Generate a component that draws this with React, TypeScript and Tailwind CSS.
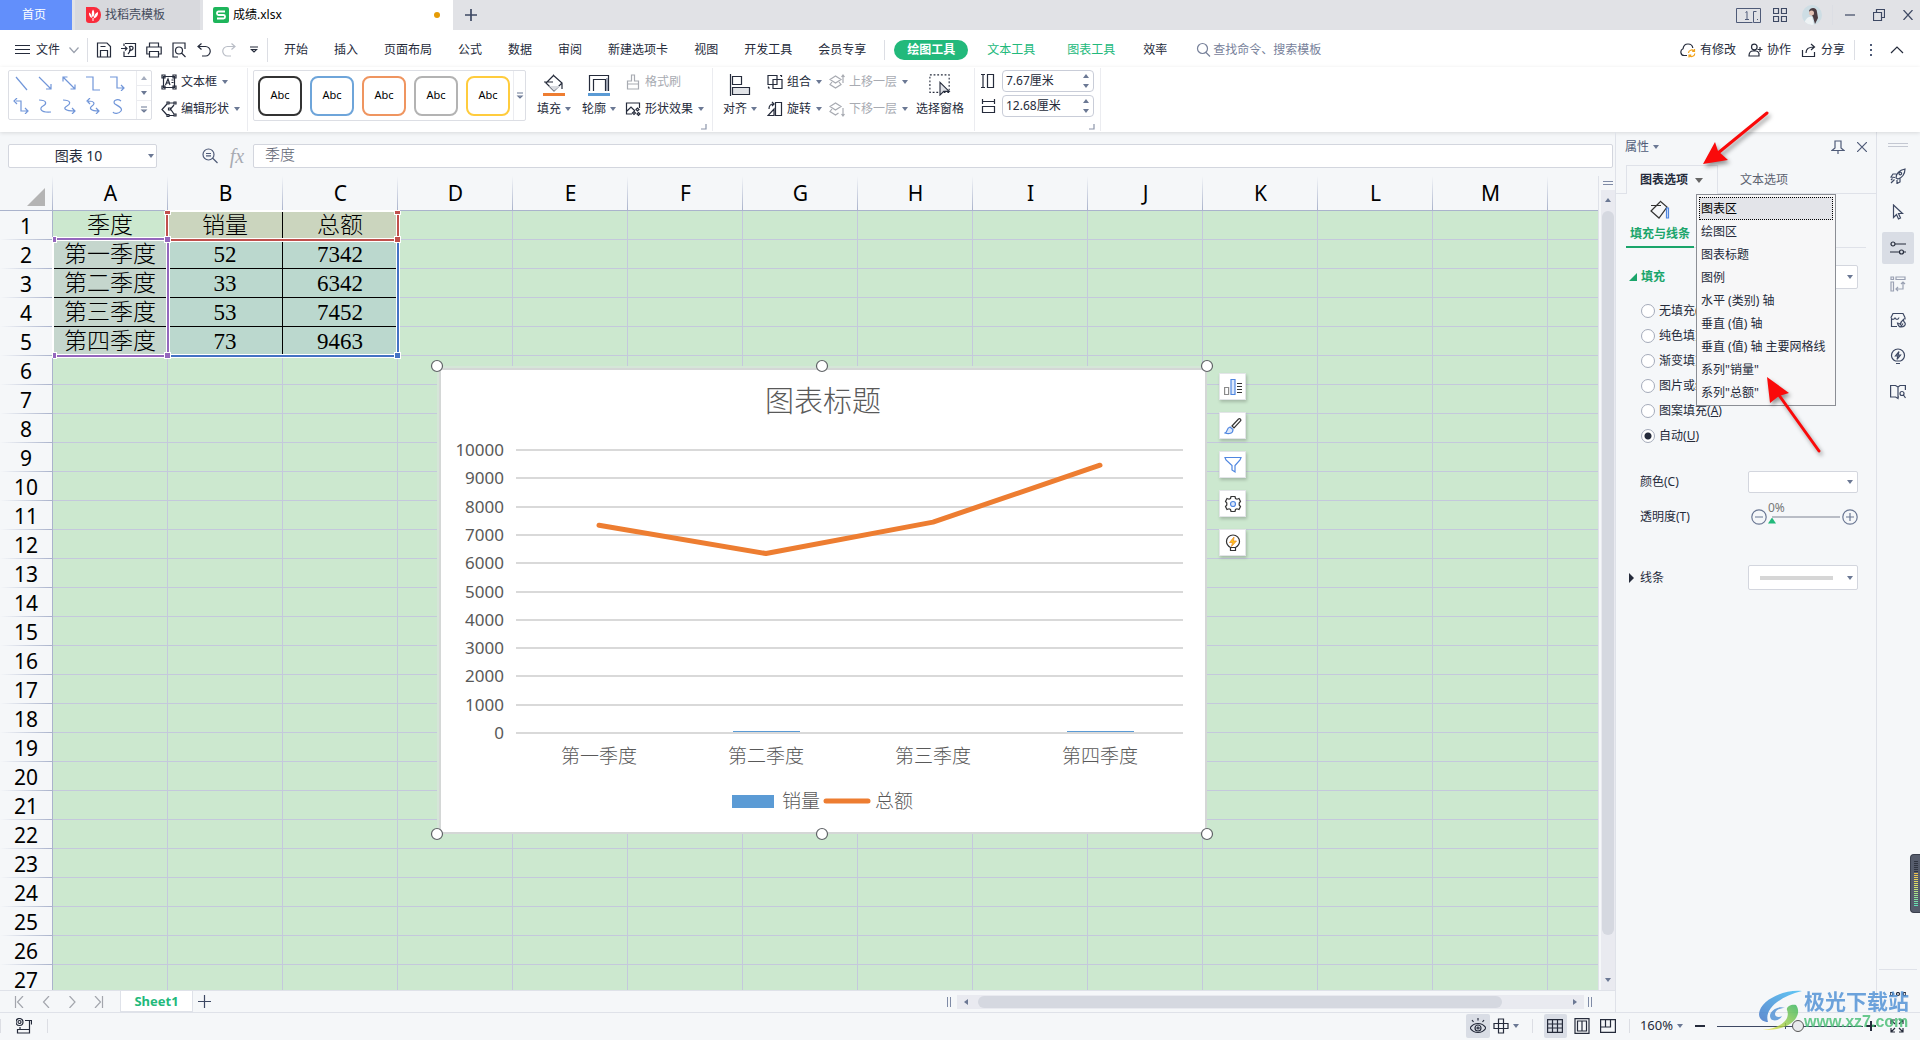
import { useState, type ReactNode } from 'react'
import { clsx } from 'clsx'

const COLUMNS = ['A', 'B', 'C', 'D', 'E', 'F', 'G', 'H', 'I', 'J', 'K', 'L', 'M']
const ROWS = Array.from({ length: 27 }, (_, i) => i + 1)

const DATA = [
  ['季度', '销量', '总额'],
  ['第一季度', '52', '7342'],
  ['第二季度', '33', '6342'],
  ['第三季度', '53', '7452'],
  ['第四季度', '73', '9463'],
]

const MENU = ['开始', '插入', '页面布局', '公式', '数据', '审阅', '新建选项卡', '视图', '开发工具', '会员专享']

const CHART_PARTS = [
  '图表区',
  '绘图区',
  '图表标题',
  '图例',
  '水平 (类别) 轴',
  '垂直 (值) 轴',
  '垂直 (值) 轴 主要网格线',
  '系列"销量"',
  '系列"总额"',
]

const FILLS = [
  ['无填充', 'N'],
  ['纯色填充', 'S'],
  ['渐变填充', 'G'],
  ['图片或纹理填充', 'P'],
  ['图案填充', 'A'],
  ['自动', 'U'],
]

function Icon({
  d,
  box = 16,
  className,
  children,
}: {
  d?: string
  box?: number
  className?: string
  children?: ReactNode
}) {
  return (
    <svg
      viewBox={`0 0 ${box} ${box}`}
      className={clsx('shrink-0', className ?? 'size-4')}
      fill="none"
      stroke="currentColor"
      strokeWidth="1.2"
      aria-hidden
    >
      {d && <path d={d} />}
      {children}
    </svg>
  )
}

function Caret({ className }: { className?: string }) {
  return (
    <svg viewBox="0 0 6 4" className={clsx('h-1 w-1.5 shrink-0', className)} aria-hidden>
      <path d="M0 0h6L3 4z" fill="#6b7894" />
    </svg>
  )
}

function Divider({ className }: { className?: string }) {
  return <span className={clsx('w-px shrink-0 bg-[#dcdee4]', className)} />
}

/* ---------- title bar ---------- */

function TitleBar() {
  return (
    <header className="flex h-[30px] shrink-0 items-center bg-[#e1e2e6] text-xs text-[#3d4863]">
      <button className="h-full w-[72px] bg-[#628ffb] pr-1 text-white">首页</button>
      <button className="ml-[3px] flex h-full w-[125px] items-center gap-1 bg-[#d8d9dd] pl-[11px] text-[#444b5c]">
        <svg viewBox="0 0 15 16" className="h-4 w-[15px]" aria-hidden>
          <path d="M0 0h8a7 8 0 0 1 0 16H3a3 3 0 0 1-3-3z" fill="#fa2c3c" />
          <path d="M7 2.500c2 3 1.500 6-.2 8C5.500 8.500 5.200 5 7 2.500zM3 5.500c2 1 3 3 3 5.500-2.200-.6-3.300-3-3-5.500zM12 5c.3 3-1 5.500-4.300 6.500.2-3 1.500-5.300 4.300-6.500zM6.500 11h1v3h-1z" fill="#fff" />
        </svg>
        找稻壳模板
      </button>
      <div className="ml-[3px] flex h-full w-[250px] items-center gap-1 bg-white pl-[10px] text-black">
        <svg viewBox="0 0 16 16" className="size-4" aria-hidden>
          <rect width="16" height="16" rx="2" fill="#1eb55b" />
          <path d="M12 4.500H5.500A1.500 1.500 0 0 0 4 6v.5A1.500 1.500 0 0 0 5.500 8h5A1.500 1.500 0 0 1 12 9.500v.5a1.500 1.500 0 0 1-1.500 1.500H4" fill="none" stroke="#fff" strokeWidth="1.800" />
        </svg>
        成绩.xlsx
        <span className="mr-[13px] ml-auto size-1.5 rounded-full bg-[#e59b06]" />
      </div>
      <button className="ml-3 size-3" aria-label="新建标签">
        <Icon box={12} className="size-3" d="M6 0v12M0 6h12">
          <path d="M6 0v12M0 6h12" />
        </Icon>
      </button>
      <div className="ml-auto flex h-full items-center pr-[7px]">
        <svg viewBox="0 0 25 15" className="h-[15px] w-[25px]" fill="none" stroke="#4f5b78" aria-hidden>
          <path d="M22 .5H.5v14h16M24.500.5v14h-7V3.500h3M24.500.5H21M21 11.500h1M9.500 4.500l1.500-1v8M9 11.500h4" />
        </svg>
        <Icon box={14} className="ml-3 size-3.5" d="M.5.5h5v5h-5zM8.500.5h5v5h-5zM.5 8.500h5v5h-5zM8.500 8.500h5v5h-5z" />
        <svg viewBox="0 0 20 20" className="ml-[15px] size-5 rounded-full" aria-hidden>
          <rect width="20" height="20" fill="#cddde4" />
          <path d="M7 6c1-4 8-4 8 1l1 6-3 6-2-7z" fill="#4a3b40" />
          <circle cx="9.500" cy="8" r="2.500" fill="#e4c3b5" />
          <path d="M2 20c1-6 4-9 8-8l2 8z" fill="#eef3f5" />
        </svg>
        <Divider className="ml-[10px] h-5 bg-[#c9cbd2]" />
        <button className="ml-3 h-3 w-2.5" aria-label="最小化">
          <Icon box={10} className="size-2.5" d="M0 5h10" />
        </button>
        <button className="ml-[18px] size-3" aria-label="还原">
          <Icon box={12} className="size-3" d="M.5 3.500h8v8h-8zM3.500 3V.5h8v8H9" />
        </button>
        <button className="ml-[18px] size-2.5" aria-label="关闭">
          <Icon box={10} className="size-2.5" d="M.5 0l9 10M9.500 0l-9 10" />
        </button>
      </div>
    </header>
  )
}

/* ---------- menu row ---------- */

const QUICK: [string, string][] = [
  ['保存', 'M1.500 1h9.500l3.500 3.500V15H1.500zM4.500 15V8.500h7V15M4.500 4.500h5'],
  ['输出为PDF', 'M4 1.500h10.500v13H3v-5M3 4V1.500M0 6.500h6M4 4.500l2 2-2 2M7 12c2-2 2.500-5 1.500-7.500 2-.5 4 0 3.500 2s-3 2-4 2'],
  ['打印', 'M3.500 5V1h9v4M3.500 12H.8V5h14.400v7h-2.700M3.500 9.500h9V15h-9z'],
  ['打印预览', 'M7 15H2V1h12v6M11 11.500l3.500 3.500M4.500 8.500a3.500 3.500 0 1 0 7 0a3.500 3.500 0 1 0-7 0'],
  ['撤销', 'M5.500 1.500L2 4.500l3.500 3M2 4.500h7.500a4.500 4.500 0 0 1 0 9.500H6'],
]

function MenuBar() {
  return (
    <nav className="flex h-[37px] shrink-0 items-center bg-white pt-0.5 text-xs text-[#252b3b]">
      <button className="ml-[15px] flex items-center gap-1.5">
        <Icon box={15} className="size-[15px]" d="M0 3.500h15M0 7.500h15M0 11.500h15" />
        文件
        <Icon box={10} className="ml-[3px] size-2.5 text-[#9aa0ad]" d="M.5 2.500L5 7.500l4.500-5" />
      </button>
      <Divider className="ml-2 h-6" />
      <div className="ml-2 flex items-center gap-[9px]">
        {QUICK.map(([name, d]) => (
          <button key={name} aria-label={name}>
            <Icon d={d} />
          </button>
        ))}
        <button aria-label="恢复" className="text-[#b9bdc6]">
          <Icon d="M10.500 1.500L14 4.500l-3.500 3M14 4.500H6.500a4.500 4.500 0 0 0 0 9.500H10" />
        </button>
        <button aria-label="自定义" className="px-1">
          <Icon box={8} className="size-2" d="M0 1h8M1.500 3.500h5L4 6z" />
        </button>
      </div>
      <Divider className="ml-[5px] h-6" />
      <div className="ml-4 flex items-center gap-[26px]">
        {MENU.map((m) => (
          <button key={m}>{m}</button>
        ))}
      </div>
      <Divider className="ml-[18px] h-5" />
      <button className="ml-[9px] h-5 rounded-full bg-[#22b97b] px-[13px] font-bold text-white">绘图工具</button>
      <button className="ml-[19px] text-[#22b97b]">文本工具</button>
      <button className="ml-8 text-[#22b97b]">图表工具</button>
      <button className="ml-7">效率</button>
      <label className="ml-7 flex items-center gap-0.5 text-[#77819a]">
        <Icon d="M2.500 6.500a5 5 0 1 0 10 0a5 5 0 1 0-10 0M11 10.500l4 4" />
        <input className="w-32 outline-none placeholder:text-[#77819a]" placeholder="查找命令、搜索模板" />
      </label>
      <div className="ml-auto flex items-center pr-4">
        <button className="flex items-center gap-1">
          <Icon d="M7 13.500H4A3.500 3.500 0 0 1 3 6.800C3.500 3.500 5.500 2 8 2s4.500 1.500 4.800 4">
            <path d="M8.500 11a3.200 3.200 0 0 1 5.500-2M14.800 11.500a3.200 3.200 0 0 1-5.500 2M14.500 7v2.300h-2.300M9 15.500v-2.300h2.300" stroke="#f2a31b" />
          </Icon>
          有修改
        </button>
        <button className="ml-3 flex items-center gap-[3px]">
          <Icon d="M3.500 5a2.800 2.800 0 1 0 5.600 0a2.800 2.800 0 1 0-5.600 0M1 14c0-3 1.500-5 4-5h3c1.500 0 2.500 1 3 2.500V14zM12 5v5M9.500 7.500h5" />
          协作
        </button>
        <button className="ml-2.5 flex items-center gap-1">
          <Icon d="M1.500 8v6.500h12V10M5 11c0-4 2.500-6 8-6M10 2l3.500 3-3.500 3" />
          分享
        </button>
        <Divider className="ml-[9px] h-5" />
        <button className="ml-[14px] w-1 text-[#4f5b78]" aria-label="更多">
          <svg viewBox="0 0 4 14" className="h-3.5 w-1" fill="#4f5b78" aria-hidden>
            <path d="M1 1h2v2H1zM1 6h2v2H1zM1 11h2v2H1z" />
          </svg>
        </button>
        <button className="ml-[17px]" aria-label="收起功能区">
          <Icon box={14} className="size-3.5" d="M1 10l6-6 6 6" />
        </button>
      </div>
    </nav>
  )
}

/* ---------- ribbon ---------- */

const LINES = [
  'M3 2l11 13',
  'M2 2l12 12M14 9v5H9',
  'M2 2l12 12M14 9.500V14H9.500M6.500 2H2v4.500',
  'M1 2h7v13h7',
  'M1 2h7v11h7M12 10l3 3-3 3',
  'M3 3h5v10h6M4 0L1 3l3 3M12 10l3 3-3 3',
  'M2 2c8 0 8 4 4 6s-3 7 8 6',
  'M2 2c8 0 8 4 4 6s-3 5 8 5M11 10l3 3-3 3',
  'M3 3c7 0 7 3 4 5s-2 5 7 5M5 0L2 3l3 3M11 10l3 3-3 3',
  'M12 3c-4-3-9 0-6 3 3 2 8 4 6 7s-7 3-8 1',
]

function SmallTool({
  label,
  d,
  caret = true,
  muted,
}: {
  label: string
  d: string
  caret?: boolean
  muted?: boolean
}) {
  return (
    <button className={clsx('flex h-6 items-center gap-1', muted && 'text-[#a8abb2]')}>
      <Icon d={d} />
      {label}
      {caret && <Caret className="ml-px" />}
    </button>
  )
}

function BigTool({ label, caret = true, children }: { label: string; caret?: boolean; children: ReactNode }) {
  return (
    <button className="flex flex-col items-center pt-1">
      {children}
      <span className="mt-[5px] flex h-4 items-center gap-1">
        {label}
        {caret && <Caret />}
      </span>
    </button>
  )
}

function SizeField({ label, value, d }: { label: string; value: string; d: string }) {
  return (
    <label className="flex items-center gap-[5px]">
      <Icon d={d} />
      <span className="flex h-[22px] w-[92px] items-center rounded-sm border border-[#c9cdd8] bg-white pr-1">
        <input className="w-0 grow px-[3px] outline-none" defaultValue={value} aria-label={label} />
        <span className="flex flex-col gap-1.5">
          <Caret className="rotate-180" />
          <Caret />
        </span>
      </span>
    </label>
  )
}

function GalleryMore() {
  return <Icon box={8} className="size-2 text-[#6b7894]" d="M1 1h6M2 4h4L4 6z" />
}

const STYLES = ['border-[#333]', 'border-[#6ea5da]', 'border-[#ef9560]', 'border-[#b3b3b3]', 'border-[#ffcc3d]']

function Ribbon() {
  return (
    <div className="relative z-10 flex h-[65px] shrink-0 bg-white py-px text-xs whitespace-nowrap text-[#252b3b] shadow-[0_1px_4px_rgba(0,0,0,0.12)]">
      <section className="flex w-[248px] items-start border-r border-[#ebecf0] pt-0.5 pl-2">
        <div className="flex h-[50px] w-36 rounded-xs border border-[#dcdee4] text-[#7196d9]">
          <div className="grid grow grid-cols-5 place-items-center pr-[7px] pb-0.5">
            {LINES.map((d) => (
              <button key={d} aria-label="线条">
                <Icon d={d} />
              </button>
            ))}
          </div>
          <div className="flex w-[15px] flex-col divide-y divide-[#ebecf0] border-l border-[#ebecf0]">
            <button className="grid grow place-items-center" aria-label="上一行">
              <Caret className="rotate-180 opacity-60" />
            </button>
            <button className="grid grow place-items-center" aria-label="下一行">
              <Caret />
            </button>
            <button className="grid grow place-items-center" aria-label="其他">
              <GalleryMore />
            </button>
          </div>
        </div>
        <div className="ml-[9px] flex flex-col gap-[3px]">
          <SmallTool
            label="文本框"
            d="M2.500 2.500h11v11h-11zM1 1h3v3H1zM12 1h3v3h-3zM1 12h3v3H1zM12 12h3v3h-3zM4.500 11L7 5l2 6M5.500 9h3M10.500 6h2M10.500 8.500h2"
          />
          <SmallTool label="编辑形状" d="M6 3L1 8.500 6 14M8 2h5M8 14.500h5M13 4L9.500 8l3.500 5M6 1h2v2H6zM13 1h2v2h-2zM7.500 7h2v2h-2zM13 13h2v2h-2zM6 13.500h2v2H6z" />
        </div>
      </section>

      <section className="relative flex w-[465px] items-start border-r border-[#ebecf0] pt-0.5 pl-[5px]">
        <div className="flex h-[51px] w-[273px] items-stretch rounded-xs border border-[#dcdee4]">
          <div className="flex grow items-center gap-2 pl-1">
            {STYLES.map((s) => (
              <button key={s} className={clsx('h-10 w-11 rounded-lg border-2 text-[11px] text-black', s)}>
                Abc
              </button>
            ))}
          </div>
          <button className="grid w-3 place-items-center border-l border-[#ebecf0]" aria-label="更多样式">
            <GalleryMore />
          </button>
        </div>
        <div className="ml-[11px] flex gap-[11px]">
          <BigTool label="填充">
            <Icon box={22} className="size-[22px]" d="M10 1l9 8-8 8-8-8 8-8M1 8h9M19 9v6">
              <path d="M6 12h11l-6 5z" fill="#d9dbe0" stroke="none" />
              <path d="M0 20.500h22" stroke="#ee7d31" strokeWidth="3" />
            </Icon>
          </BigTool>
          <BigTool label="轮廓">
            <Icon box={22} className="size-[22px]" d="M1.500 17V1.500h19V17M5.500 17V5.500h12V17">
              <path d="M19 4v13" stroke="#9da3b1" strokeWidth="2" />
              <path d="M0 20.500h22" stroke="#5b9bd5" strokeWidth="3" />
            </Icon>
          </BigTool>
        </div>
        <div className="ml-[9px] flex flex-col gap-[3px]">
          <SmallTool label="格式刷" caret={false} muted d="M6.500 1h3v6h4v3h-11V7h4zM2.500 10v5h11v-5" />
          <SmallTool label="形状效果" d="M7 13H1.500V2h13v5M2 10l4-4 4 4M11 8.500l1.500-1.500L14 8.500 12.500 10zM7.500 12L9 10.500l1.500 1.500L9 13.500zM12 13l1.500-1.500L15 13l-1.500 1.500z" />
        </div>
        <Icon box={8} className="absolute right-1 bottom-0 size-2 text-[#8b94a9]" d="M6 1v5H1" />
      </section>

      <section className="flex w-[262px] items-start border-r border-[#ebecf0] pt-0.5 pl-2.5">
        <BigTool label="对齐">
          <Icon box={22} className="size-[22px]" d="M1.500 0v22M3.500 2.500h9v8h-9z">
            <path d="M3.500 13.500h17v7h-17z" fill="#e2e4e8" />
          </Icon>
        </BigTool>
        <div className="ml-2.5 flex flex-col gap-[3px]">
          <SmallTool label="组合" d="M1 1.500h9v9H1zM6 5.500h9v9H6zM13 1.500h2M14.500 1v2M1 14h2M1.500 12.500v2" />
          <SmallTool label="旋转" d="M8.500 1.500h6v13h-6zM1 14.500h6V8zM2 8c0-3 1-5 4.500-5M5 1l2 2-2 2" />
        </div>
        <div className="ml-[7px] flex flex-col gap-[3px]">
          <SmallTool label="上移一层" muted d="M1 5.500L6.500 2 12 5.500 6.500 9zM3 8l-2 2.500L6.500 14l5.500-3.500L10 8M14 9V1M12.500 3L14 1l1.500 2" />
          <SmallTool label="下移一层" muted d="M1 5.500L6.500 2 12 5.500 6.500 9zM3 8l-2 2.500L6.500 14l3-2M14 7v8M12.500 13l1.500 2 1.500-2" />
        </div>
        <div className="ml-2">
          <BigTool label="选择窗格" caret={false}>
            <Icon box={24} className="h-[22px] w-6">
              <path d="M1 1h21v19H1z" strokeDasharray="2 2" />
              <path d="M12 9v14l4-4h6z" fill="#dfe1e6" />
            </Icon>
          </BigTool>
        </div>
      </section>

      <section className="relative flex w-[126px] flex-col gap-[3px] border-r border-[#ebecf0] pt-0.5 pl-[6px]">
        <SizeField label="高度" value="7.67厘米" d="M0 1.500h4M2 1.500v13M0 14.500h4M6.500 1.500h6v13h-6z" />
        <SizeField label="宽度" value="12.68厘米" d="M1 3.500h13M1.500 1v5M13.500 1v5M1.500 8.500h12v6h-12z" />
        <Icon box={8} className="absolute right-1 bottom-0 size-2 text-[#8b94a9]" d="M6 1v5H1" />
      </section>
    </div>
  )
}

function FormulaBar() {
  return (
    <div className="flex h-11 shrink-0 items-center pt-[3px] pr-0.5 pl-2">
      <div className="flex h-6 w-[149px] items-center rounded-xs border border-[#d3d6de] bg-white pr-0.5">
        <input
          className="w-0 grow text-center text-sm text-[#252b3b] outline-none"
          defaultValue="图表 10"
          aria-label="名称框"
        />
        <Caret />
      </div>
      <button className="ml-[45px]" aria-label="浏览公式">
        <Icon className="size-4 text-[#4f5b78]" d="M1 6.500a5.500 5.500 0 1 0 11 0a5.500 5.500 0 1 0-11 0M11 10.500l4.500 4.500M4 5.500h5M4 7.800h5" />
      </button>
      <button className="ml-2.5 w-[18px] font-['Liberation_Serif',serif] text-xl leading-none text-[#a8abb2] italic">
        fx
      </button>
      <input
        className="ml-[7px] h-6 w-0 grow rounded-xs border border-[#d3d6de] bg-white px-[11px] pb-1 text-[15px] font-light text-[#5c6270] outline-none"
        defaultValue="季度"
        aria-label="编辑栏"
      />
    </div>
  )
}

/* ---------- chart ---------- */

const CHART_LEFT = 79
const CHART_RIGHT = 746
const CHART_TOP = 84
const CHART_BOTTOM = 367

function yOf(value: number) {
  return CHART_BOTTOM - (value / 10000) * (CHART_BOTTOM - CHART_TOP)
}

function Chart() {
  const quarters = DATA.slice(1)
  const step = (CHART_RIGHT - CHART_LEFT) / quarters.length
  const xOf = (i: number) => Math.round(CHART_LEFT + step * (i + 0.5))
  const points = quarters.map((q, i) => `${xOf(i)},${yOf(Number(q[2]))}`).join(' ')

  return (
    <svg
      viewBox="0 0 770 468"
      className="h-[468px] w-[770px] overflow-visible font-['Noto_Sans','Noto_Sans_CJK_SC',sans-serif]"
      fill="#595959"
    >
      <rect x="0" y="0" width="770" height="468" fill="#d5e6d8" />
      <rect x="3" y="3" width="766" height="464" fill="#fff" stroke="#d4d7d6" strokeWidth="2" />
      <text x="386" y="46" fontSize="29" fontWeight="300" textAnchor="middle">
        图表标题
      </text>
      {Array.from({ length: 11 }, (_, i) => (
        <g key={i}>
          <line x1={CHART_LEFT} x2={CHART_RIGHT} y1={Math.round(yOf(i * 1000))} y2={Math.round(yOf(i * 1000))} stroke="#d9d9d9" strokeWidth="2" />
          <text x="67" y={Math.round(yOf(i * 1000)) + 6} fontSize="17" textAnchor="end">
            {i * 1000}
          </text>
        </g>
      ))}
      {[1, 3].map((i) => (
        <rect key={i} x={xOf(i) - 33} y={CHART_BOTTOM - 2} width="67" height="1" fill="#5b9bd5" />
      ))}
      <polyline points={points} fill="none" stroke="#ed7d31" strokeWidth="5" strokeLinecap="round" strokeLinejoin="round" />
      {quarters.map((q, i) => (
        <text key={q[0]} x={xOf(i)} y="397" fontSize="19" fontWeight="300" textAnchor="middle">
          {q[0]}
        </text>
      ))}
      <rect x="295" y="429" width="42" height="13" fill="#5b9bd5" />
      <text x="345" y="442" fontSize="19" fontWeight="300">
        销量
      </text>
      <line x1="389" x2="431" y1="435" y2="435" stroke="#ed7d31" strokeWidth="5" strokeLinecap="round" />
      <text x="438" y="442" fontSize="19" fontWeight="300">
        总额
      </text>
      {[0, 385, 770].map((x) =>
        [0, 468].map((y) => (
          <circle key={`${x}-${y}`} cx={x} cy={y} r="5.500" fill="#fff" stroke="#5f6366" strokeWidth="1.200" />
        )),
      )}
    </svg>
  )
}

function ChartButtons() {
  const box = 'grid size-[27px] place-items-center border border-[#e3e5e8] bg-white text-[#333] shadow-[1px_2px_3px_rgba(0,0,0,0.2)]'
  return (
    <div className="flex flex-col gap-3">
      <button className={box} aria-label="图表元素">
        <Icon box={18} className="size-[18px]" d="M13 5.500h5M13 8.500h5M13 11.500h5M13 14.500h5">
          <path d="M.6 9.500h4v7h-4z" stroke="#8b8b8b" />
          <path d="M7 1.500h4v15H7z" stroke="#4f86e0" fill="#dce8fb" />
        </Icon>
      </button>
      <button className={box} aria-label="图表样式">
        <Icon box={18} className="size-[18px]" d="M8 9l6.500-7c1.500-1 3 .5 2 2L10 11z">
          <path d="M1 16c3-1 1-5 5-6l3 2.500c0 4-4 5-8 3.500z" stroke="#4f86e0" fill="#dce8fb" />
        </Icon>
      </button>
      <button className={box} aria-label="筛选器">
        <Icon box={18} className="size-[18px] text-[#4f86e0]" d="M1 1.500h16L16 4l-5 5.500V16l-3-2V9.500L2 4z" />
      </button>
      <button className={box} aria-label="设置">
        <Icon
          box={18}
          className="size-[18px]"
          d="M7 1.500h4l.5 2 1.500.7 2-.7 1.500 3-1.300 1.500v2l1.300 1.500-1.500 3-2-.7-1.500.7-.5 2H7l-.5-2-1.500-.7-2 .7-1.500-3L2.800 10V8L1.500 6.500l1.500-3 2 .7 1.500-.7z"
        >
          <circle cx="9" cy="9" r="2.500" stroke="#4f86e0" fill="#dce8fb" />
        </Icon>
      </button>
      <button className={box} aria-label="智能推荐">
        <Icon box={18} className="size-[18px]" d="M6.500 13.500C4 12 2.500 10 2.500 7.500a6.500 6.500 0 0 1 13 0c0 2.500-1.500 4.500-4 6zM6.500 16.500h5v-3h-5z">
          <path d="M10 3L5.500 8.500h3L7.500 12.500 12.500 7h-3z" fill="#ffc21a" stroke="#e8912d" strokeWidth="0.800" />
        </Icon>
      </button>
    </div>
  )
}

/* ---------- sheet ---------- */

function cellStyle(r: number, c: number) {
  if (r > 5 || c > 2) return 'border-[#c4c8dc]'
  if (r === 1) return c === 0 ? 'border-[#c4c8dc]' : clsx('bg-[#cbd5be] border-b-[#c4c8dc]', c === 1 ? 'border-r-black' : 'border-r-[#c4c8dc]')
  const bottom = r === 5 ? 'border-b-[#c4c8dc]' : 'border-b-black'
  const right = c === 1 ? 'border-r-black' : 'border-r-[#c4c8dc]'
  return clsx(c === 0 ? 'bg-[#c5d6cd]' : 'bg-[#bbd8ce]', bottom, right)
}

function Knob({ className }: { className?: string }) {
  return <span className={clsx('absolute size-[7px] border border-white', className)} />
}

function Selections() {
  const halo = 'absolute box-border shadow-[0_0_0_1px_#fff,inset_0_0_0_1px_#fff]'
  return (
    <div className="pointer-events-none">
      <div className={clsx(halo, 'top-[63px] left-[167px] h-[118px] w-[232px] border-2 border-[#4472c4]')} />
      <div className={clsx(halo, 'top-[35px] left-[166px] h-[30px] w-[233px] border-2 border-t-0 border-[#c0504d]')} />
      <div className={clsx(halo, 'top-[62px] left-[53px] h-[119px] w-[116px] border-2 border-l-0 border-[#9467bd]')} />
      <Knob className="top-[35px] left-[164px] h-1 border-t-0 bg-[#c0504d]" />
      <Knob className="top-[35px] left-[394px] h-1 border-t-0 bg-[#c0504d]" />
      <Knob className="top-[60px] left-[394px] bg-[#c0504d]" />
      <Knob className="top-[60px] left-[164px] bg-[#9467bd]" />
      <Knob className="top-[60px] left-[53px] w-1 border-l-0 bg-[#9467bd]" />
      <Knob className="top-[176px] left-[53px] w-1 border-l-0 bg-[#9467bd]" />
      <Knob className="top-[176px] left-[164px] bg-[#9467bd]" />
      <Knob className="top-[176px] left-[394px] bg-[#4472c4]" />
    </div>
  )
}

function Sheet() {
  return (
    <div className="flex min-h-0 grow">
      <div className="relative w-0 grow overflow-hidden border-r border-[#dfe2e9] bg-[#cce8cf]">
        <table className="w-full table-fixed border-separate border-spacing-0 text-black">
          <colgroup>
            <col className="w-[53px]" />
            {COLUMNS.map((c) => (
              <col key={c} className="w-[115px]" />
            ))}
            <col />
          </colgroup>
          <thead>
            <tr className="h-[35px] bg-[#f5f7f9] text-[21px] leading-7">
              <th className="border-b border-[#aab3cc] bg-[linear-gradient(to_bottom,transparent,#aab3cc)] bg-[length:1px_100%] bg-right bg-no-repeat p-0">
                <svg viewBox="0 0 18 18" className="mt-2 mr-2 ml-auto size-[18px]" aria-hidden>
                  <path d="M18 0v18H0z" fill="#b4b4b4" />
                </svg>
              </th>
              {COLUMNS.map((c) => (
                <th
                  key={c}
                  className="border-b border-[#aab3cc] bg-[linear-gradient(to_bottom,transparent,#aab3cc)] bg-[length:1px_100%] bg-right bg-no-repeat p-0 font-normal"
                >
                  {c}
                </th>
              ))}
              <th className="border-b border-[#aab3cc] p-0" />
            </tr>
          </thead>
          <tbody>
            {ROWS.map((r) => (
              <tr key={r} className="h-[29px]">
                <th className="border-r border-[#aab3cc] bg-[#f5f7f9] bg-[linear-gradient(to_right,transparent,#aab3cc)] bg-[length:100%_1px] bg-bottom bg-no-repeat p-0 text-[21px] leading-[26px] font-normal">
                  {r}
                </th>
                {COLUMNS.map((c, i) => (
                  <td
                    key={c}
                    className={clsx(
                      "border-r border-b p-0 pt-0.5 text-center font-['Liberation_Serif','Noto_Sans_CJK_SC',serif] text-[23px] leading-[26px] font-light",
                      cellStyle(r, i),
                    )}
                  >
                    {DATA[r - 1]?.[i]}
                  </td>
                ))}
                <td className="border-b border-[#c4c8dc] p-0" />
              </tr>
            ))}
          </tbody>
        </table>
        <Selections />
        <div className="absolute top-[190px] left-[437px]">
          <Chart />
        </div>
        <div className="absolute top-[197px] left-[1219px]">
          <ChartButtons />
        </div>
      </div>
      <div className="flex w-4 flex-col pl-0.5">
        <div className="flex h-3.5 flex-col items-center justify-center gap-0.5 px-0.5">
          <span className="h-px w-full bg-[#7f8ba6]" />
          <span className="h-px w-full bg-[#7f8ba6]" />
        </div>
        <div className="flex grow flex-col items-center bg-[#e9eaf0] py-2">
          <Caret className="rotate-180" />
          <div className="mt-[9px] mb-[43px] w-3 grow rounded-full bg-[#d5d8e0]" />
          <Caret />
        </div>
      </div>
    </div>
  )
}

const NAV: [string, string][] = [
  ['第一个', 'M1.500 0v12M9 0L3.500 6 9 12'],
  ['上一个', 'M9 0L3.500 6 9 12'],
  ['下一个', 'M3.500 0L9 6l-5.500 6'],
  ['最后一个', 'M3 0l5.500 6L3 12M10.500 0v12'],
]

function SheetTabs() {
  return (
    <div className="flex h-[22px] shrink-0 items-center border-t border-[#dfe2e9] pl-3.5">
      <div className="flex items-center gap-3.5 text-[#a3a6ad]">
        {NAV.map(([name, d]) => (
          <button key={name} aria-label={name}>
            <Icon box={12} className="size-3" d={d} />
          </button>
        ))}
      </div>
      <button className="-mt-px ml-4 h-[21px] w-[73px] border-x border-b border-[#dfe2e9] bg-white text-[13px] leading-5 font-bold text-[#22b97b]">
        Sheet1
      </button>
      <button className="ml-[5px]" aria-label="新建工作表">
        <Icon box={13} className="size-[13px] text-[#3d4863]" d="M6.500 0v13M0 6.500h13" />
      </button>
      <div className="ml-auto flex w-[668px] items-center pr-[23px]">
        <span className="h-2.5 w-1 border-x border-[#7f8ba6]" />
        <div className="ml-[6px] flex h-3.5 grow items-center bg-[#e9eaf0] px-1.5">
          <Caret className="rotate-90" />
          <div className="mr-[70px] ml-[9px] h-3 grow rounded-full bg-[#d5d8e0]" />
          <Caret className="-rotate-90" />
        </div>
        <span className="ml-1 h-2.5 w-1 border-x border-[#7f8ba6]" />
      </div>
    </div>
  )
}

/* ---------- property panel ---------- */

function PanelSelect({ label, className, children }: { label: string; className?: string; children?: ReactNode }) {
  return (
    <span className={clsx('relative ml-auto block w-[110px]', className)}>
      <select className="size-full appearance-none rounded-xs border border-[#d3d6de] bg-white" aria-label={label}>
        <option></option>
      </select>
      <span className="pointer-events-none absolute inset-0 flex items-center justify-end pr-[5px]">
        {children}
        <Caret />
      </span>
    </span>
  )
}

function PartMenu() {
  const [selected, setSelected] = useState(0)
  return (
    <div
      className="absolute top-[62px] left-20 w-[140px] border border-[#8b8e95] bg-[#f7f7f8] px-0.5 pt-0.5 pb-px"
      role="listbox"
    >
      {CHART_PARTS.map((part, i) => (
        <button
          key={part}
          role="option"
          aria-selected={i === selected}
          onClick={() => setSelected(i)}
          className={clsx(
            'block h-[23px] w-full border border-dotted pl-px text-left leading-5 whitespace-nowrap',
            i === selected ? 'border-black bg-[#e3e4e9] text-black' : 'border-transparent',
          )}
        >
          {part}
        </button>
      ))}
    </div>
  )
}

function Arrows() {
  return (
    <svg
      className="pointer-events-none absolute top-0 left-0 h-[340px] w-[260px] overflow-visible drop-shadow-[2px_3px_2px_rgba(0,0,0,0.4)]"
      viewBox="0 0 260 340"
      fill="#fa0a0a"
      stroke="#fa0a0a"
      aria-hidden
    >
      <path d="M151-19L102 21" strokeWidth="3" strokeLinecap="round" />
      <path d="M87 32l12-22 3 9 10 9z" stroke="none" />
      <path d="M203 319l-43-60" strokeWidth="3" strokeLinecap="round" />
      <path d="M151 245l22 16-10 3-9 7z" stroke="none" />
    </svg>
  )
}

function PropertyPanel() {
  const [fill, setFill] = useState('自动')
  return (
    <aside className="relative z-20 w-[261px] shrink-0 border-l border-[#dfe2e9] text-xs text-[#252b3b]">
      <div className="mb-[3px] flex h-[30px] items-center pr-[9px] pl-[9px] text-[#4f5b78]">
        <button className="flex items-center gap-1">
          属性
          <Caret />
        </button>
        <button className="ml-auto" aria-label="固定">
          <Icon box={14} className="size-3.5" d="M4 1h6v7l3 2.500H1L4 8zM7 10.500V14" />
        </button>
        <button className="ml-3" aria-label="关闭">
          <Icon box={10} className="size-2.5" d="M0 0l10 10M10 0L0 10" />
        </button>
      </div>

      <div className="flex h-[29px]">
        <span className="w-2.5 border-b border-[#dfe2e9]" />
        <button className="flex w-[92px] items-center gap-[7px] border-x border-t border-[#dfe2e9] pl-[13px] font-bold">
          图表选项
          <svg viewBox="0 0 8 5" className="h-[5px] w-2" aria-hidden>
            <path d="M0 0h8L4 5z" fill="#666" />
          </svg>
        </button>
        <button className="grow border-b border-[#dfe2e9] pt-px pl-[22px] text-left text-[#5c6270]">文本选项</button>
      </div>

      <div className="mx-2.5 flex border-b border-[#dfe2e9]">
        <button className="-mb-px flex w-[68px] flex-col items-center border-b-2 border-[#1aa56b] pt-1.5 pb-1 font-bold text-[#1aa56b]">
          <Icon box={20} className="size-5 text-[#333]" d="M10 1l7 6-8 11-8-7 9-9M1 5.500h10">
            <path d="M16.500 8h2v10h-2z" stroke="#4f86e0" fill="#dce8fb" />
          </Icon>
          <span className="mt-1.5 h-4">填充与线条</span>
        </button>
      </div>

      <div className="mt-[17px] flex h-6 items-center gap-1 pr-[18px] pl-[13px] font-bold text-[#1aa56b]">
        <svg viewBox="0 0 8 8" className="size-2" aria-hidden>
          <path d="M8 0v8H0z" fill="#1aa56b" />
        </svg>
        填充
        <PanelSelect label="填充" className="h-6" />
      </div>

      <div className="mt-[9px] pl-[25px]">
        {FILLS.map(([name, key]) => (
          <label key={name} className="flex h-[25px] w-fit items-center gap-1 whitespace-nowrap">
            <input
              type="radio"
              name="fill"
              checked={fill === name}
              onChange={() => setFill(name)}
              className="size-3.5 appearance-none rounded-full border border-[#a5abba] bg-white checked:bg-[radial-gradient(#252b3b_3px,transparent_4px)]"
            />
            <span>
              {name}(<u>{key}</u>)
            </span>
          </label>
        ))}
      </div>

      <div className="mt-[23px] flex h-[22px] items-center pr-[18px] pl-6">
        颜色(C)
        <PanelSelect label="颜色" className="h-[22px]" />
      </div>

      <div className="mt-3 flex h-6 items-center pr-[18px] pl-6">
        <label htmlFor="alpha">透明度(T)</label>
        <div className="ml-auto flex items-center text-[#6b7894]">
          <button aria-label="减少">
            <Icon className="size-4" d="M.8 8a7.200 7.200 0 1 0 14.400 0a7.200 7.200 0 1 0-14.400 0M4 8h8" />
          </button>
          <span className="relative ml-px flex">
            <span className="absolute bottom-2.5 left-0 text-xs leading-3 text-[#777]">0%</span>
            <input
              id="alpha"
              type="range"
              defaultValue={0}
              className="h-3.5 w-[73px] appearance-none bg-[linear-gradient(#b9bdc6,#b9bdc6)] bg-[length:68px_2px] bg-[position:4px_6px] bg-no-repeat [&::-webkit-slider-thumb]:mt-[7px] [&::-webkit-slider-thumb]:h-1.5 [&::-webkit-slider-thumb]:w-2 [&::-webkit-slider-thumb]:appearance-none [&::-webkit-slider-thumb]:bg-[#22b97b] [&::-webkit-slider-thumb]:[clip-path:polygon(50%_0,100%_100%,0_100%)]"
            />
          </span>
          <button className="ml-px" aria-label="增加">
            <Icon className="size-4" d="M.8 8a7.200 7.200 0 1 0 14.400 0a7.200 7.200 0 1 0-14.400 0M4 8h8M8 4v8" />
          </button>
        </div>
      </div>

      <div className="mt-9 flex h-[25px] items-center pr-[18px] pl-[13px]">
        <svg viewBox="0 0 5 10" className="mr-1.5 h-2.5 w-[5px]" aria-hidden>
          <path d="M0 0l5 5-5 5z" fill="#252b3b" />
        </svg>
        线条
        <PanelSelect label="线条" className="h-[25px]">
          <span className="mr-[14px] h-1 w-[73px] bg-[#d6d6d6]" />
        </PanelSelect>
      </div>

      <PartMenu />
      <Arrows />
    </aside>
  )
}

const RAIL: [string, string][] = [
  ['快速', 'M6 10c0-4 3-8 9-9 0 5-3 9-7 10zM6.500 6H3L1 9l4 .5M10 10.500V14l-3 1.500L7 12M9 5.500a1.300 1.300 0 1 0 2.600 0a1.300 1.300 0 1 0-2.600 0M1 15l3.500-3.500M1 12l1.500-1.500'],
  ['选择', 'M3.500 1v12.500l3-3 2 4.500 2-1-2-4.500h4z'],
  ['属性', 'M5 4h11M0 12h9M14 12h2M1 4a2 2 0 1 0 4 0a2 2 0 1 0-4 0M9.500 12a2 2 0 1 0 4 0a2 2 0 1 0-4 0'],
  ['分析', 'M1 1h2.500v2.500H1zM6 1h9v2.500H6zM1 6h2.500v9H1zM13 6v7H6M11 8l2-2 2 2M8 11l-2 2 2 2'],
  ['素材', 'M7 14.500H1.500V7M1 5.500L3 1.500h10l2 4M1 5.500c.5 2.500 3.500 2.500 4 0 .5 2.500 3.500 2.500 4 0M15 5.500v2M7.500 11c1 0 2 .5 3 1.500 0-2 1-3.500 3-5-.3 1.500 0 2 1.500 3.500 1 2-1 4-4 4-2 0-3-2-3.500-4zM11 14.500l2-3'],
  ['智能', 'M5.500 13C3 11.800 1.500 9.800 1.500 7.500a6.500 6.500 0 0 1 13 0c0 2.300-1.500 4.300-4 5.500zM6 15.500h4M9 3.500L5.500 8H8l-1 3.500L10.500 7H8z'],
  ['帮助', 'M8 3L5.500 1.500H.6V13h5L8 14.500V3l2-1.500h5.400V6M8 13h1M10 9.500a2 2 0 1 0 4 0a2 2 0 1 0-4 0M13.500 11l2 3'],
]

function Rail() {
  return (
    <aside className="flex w-11 shrink-0 flex-col items-center border-l border-[#dfe2e9] pt-[11px] pr-px text-[#3d4863]">
      <span className="h-1 w-5 border-y border-[#c4c8d2]" />
      <div className="mt-[13px] flex flex-col gap-1">
        {RAIL.map(([name, d]) => (
          <button
            key={name}
            aria-label={name}
            className={clsx(
              'grid size-8 place-items-center rounded-xs',
              name === '属性' && 'bg-[#d9dde5] text-[#252b3b]',
              name === '分析' && 'text-[#9aa1b3]',
            )}
          >
            <Icon d={d} />
          </button>
        ))}
      </div>
      <div className="mt-auto mb-1 flex w-[38px] flex-col items-center border-t border-[#dfe2e9] pt-[22px]">
        <Icon box={16} className="size-4 text-[#252b3b]" d="M0 2a1.500 1.500 0 1 0 3 0a1.500 1.500 0 1 0-3 0M6.500 2a1.500 1.500 0 1 0 3 0a1.500 1.500 0 1 0-3 0M13 2a1.500 1.500 0 1 0 3 0a1.500 1.500 0 1 0-3 0" />
      </div>
    </aside>
  )
}

/* ---------- status bar ---------- */

function StatusBar() {
  return (
    <footer className="flex h-7 shrink-0 items-center border-t border-[#dfe2e9] pr-4 pb-px text-[#252b3b]">
      <Divider className="h-3.5" />
      <button className="ml-[15px]" aria-label="录制宏">
        <Icon d="M0 4a3.500 3.500 0 1 0 7 0a3.500 3.500 0 1 0-7 0M2 4a1.500 1.500 0 1 0 3 0a1.500 1.500 0 1 0-3 0M9 2.500h6.500v4M13.500 3v12h-12v-3.500h12M4 9v2" />
      </button>
      <Divider className="ml-[15px] h-3.5" />
      <div className="ml-auto flex items-center">
        <button className="grid size-6 place-items-center rounded-xs bg-[#d9dde5]" aria-label="护眼模式">
          <Icon d="M0 10c4-6 12-6 16 0-4 6-12 6-16 0zM5 10a3 3 0 1 0 6 0a3 3 0 1 0-6 0M8 0v2.500M2 2l1.500 2M14 2l-1.500 2M8 9a1 1 0 1 0 .1 0" />
        </button>
        <button className="ml-[3px] flex items-center gap-1" aria-label="阅读模式">
          <Icon d="M5.500 1h5v14h-5zM1 5.500h14v5H1z" />
          <Caret />
        </button>
        <Divider className="ml-[13px] h-3.5" />
        <button className="ml-[11px] grid h-6 w-[23px] place-items-center rounded-xs bg-[#d9dde5]" aria-label="普通视图">
          <Icon d="M.6 1.600h14.800v12.800H.6zM.6 6h14.800M.6 10h14.800M5.500 2v12M10.500 2v12" />
        </button>
        <button className="ml-[7px]" aria-label="页面布局">
          <Icon d="M1 .6h14v14.800H1zM3.500 3h9v10h-9zM8 3v10" />
        </button>
        <button className="ml-[10px]" aria-label="分页预览">
          <Icon d="M.6 1.600h14.800v12.800H.6zM.6 9h9.900V2M5.500 2v7" />
        </button>
        <Divider className="ml-[13px] h-3.5" />
        <button className="ml-2.5 flex items-center gap-1 text-[13px]">
          160%
          <Caret />
        </button>
        <button className="ml-3" aria-label="缩小">
          <Icon box={10} className="size-2.5">
            <path d="M0 5h10" strokeWidth="2" />
          </Icon>
        </button>
        <input
          type="range"
          aria-label="显示比例"
          defaultValue={56}
          className="ml-3 h-3 w-[146px] appearance-none bg-[linear-gradient(#3d4863,#3d4863),linear-gradient(#3d4863,#3d4863)] bg-[length:100%_1px,1px_6px] bg-[position:0_6px,68px_3px] bg-no-repeat [&::-webkit-slider-thumb]:size-3 [&::-webkit-slider-thumb]:appearance-none [&::-webkit-slider-thumb]:rounded-full [&::-webkit-slider-thumb]:border [&::-webkit-slider-thumb]:border-[#555] [&::-webkit-slider-thumb]:bg-[#e9eaec]"
        />
        <button className="ml-[3px]" aria-label="放大">
          <Icon box={10} className="size-2.5">
            <path d="M0 5h10M5 0v10" strokeWidth="2" />
          </Icon>
        </button>
        <button className="ml-3.5" aria-label="全屏">
          <Icon box={14} className="size-3.5" d="M1 5V1h4M9 1h4v4M13 9v4H9M5 13H1V9M1 1l4 4M13 1L9 5M13 13L9 9M1 13l4-4" />
        </button>
      </div>
    </footer>
  )
}

/* ---------- floating bits ---------- */

function Meter() {
  return (
    <div className="absolute right-0 bottom-[127px] z-30 h-[59px] w-2.5 rounded-l-sm border border-r-0 border-[#3a3f4d] bg-[#565c6c] py-1.5 pr-0.5 pl-[3px]">
      <div className="h-full bg-[linear-gradient(#2f3340_25%,#f0c04a_26%,#dbe36a_55%,#5ce0b8)] [mask-image:repeating-linear-gradient(#000_0_1px,transparent_1px_2px)]" />
    </div>
  )
}

function Watermark() {
  return (
    <div className="pointer-events-none absolute right-[11px] bottom-2 z-30 flex items-center opacity-80">
      <svg viewBox="0 0 46 42" className="h-[42px] w-[46px]" aria-hidden>
        <defs>
          <linearGradient id="swoosh" x1="0" x2="1" y1="1" y2="0">
            <stop offset="0" stopColor="#3c6fc4" />
            <stop offset="1" stopColor="#3cbcf5" />
          </linearGradient>
          <linearGradient id="leaf" x1="0" x2="1" y1="1" y2="0">
            <stop offset="0" stopColor="#f3e33b" />
            <stop offset="1" stopColor="#2fb35a" />
          </linearGradient>
        </defs>
        <path d="M44 1C26-1 2 10 1 24c0 5 4 8 9 8C6 20 20 7 44 1z" fill="url(#swoosh)" />
        <path d="M27 18c-9-3-18 5-14 11 3 3 9 1 11-3-3 2-7 1-7-2 0-4 5-6 10-6z" fill="#4a8ed4" />
        <path d="M38 15c7 9-3 26-33 25C22 38 33 30 29 20c-1-3 4-6 9-5z" fill="url(#leaf)" />
      </svg>
      <div>
        <div className="text-[21px] leading-[22px] font-bold text-[#4a8ed4]">极光下载站</div>
        <div className="font-['Liberation_Sans',sans-serif] text-base leading-5 font-bold text-[#45bd72]">www.xz7.com</div>
      </div>
    </div>
  )
}

export default function App() {
  return (
    <div className="relative flex h-screen flex-col overflow-hidden bg-[#f5f7f9] font-['Noto_Sans','Noto_Sans_CJK_SC',sans-serif]">
      <TitleBar />
      <MenuBar />
      <Ribbon />
      <div className="flex min-h-0 grow">
        <main className="flex w-0 grow flex-col">
          <FormulaBar />
          <Sheet />
          <SheetTabs />
        </main>
        <PropertyPanel />
        <Rail />
      </div>
      <StatusBar />
      <Meter />
      <Watermark />
    </div>
  )
}
